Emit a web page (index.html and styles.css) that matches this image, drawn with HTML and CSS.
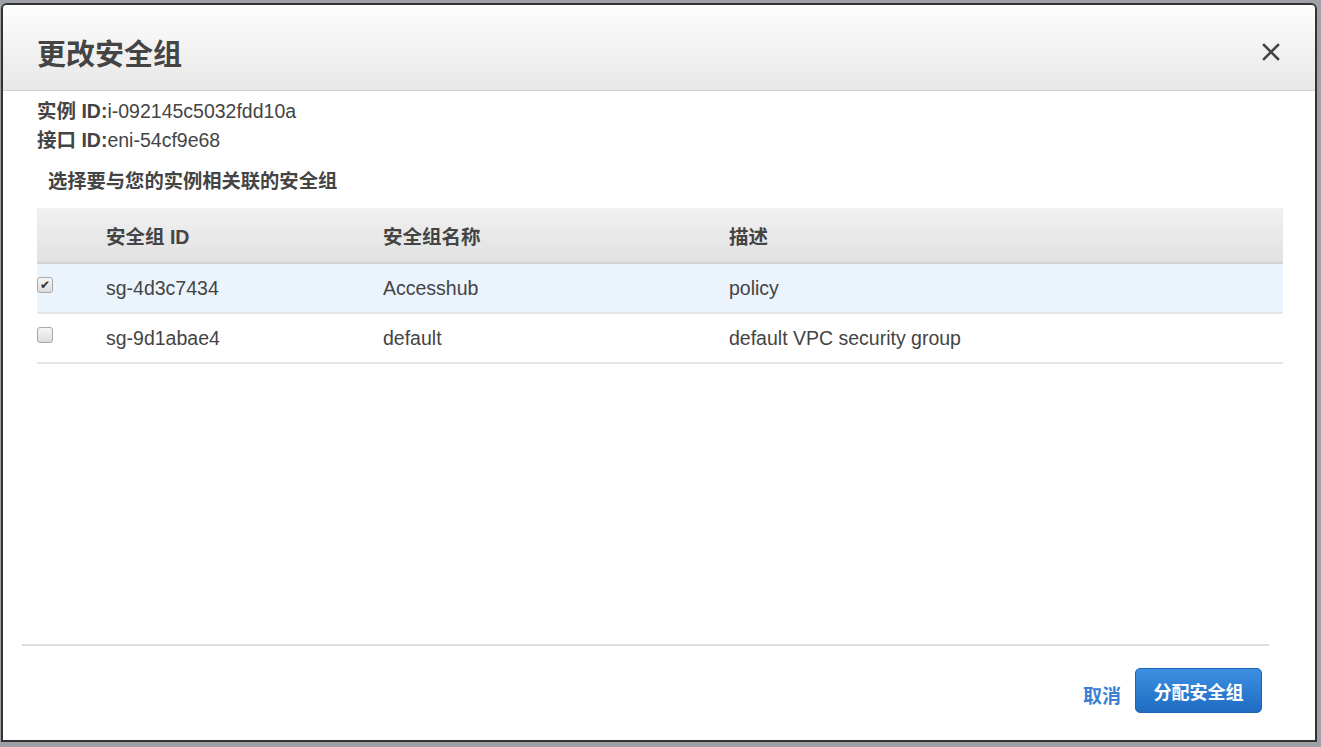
FILE: index.html
```html
<!DOCTYPE html>
<html lang="zh-CN">
<head>
<meta charset="UTF-8">
<title>更改安全组</title>
<link rel="stylesheet" href="styles.css">
</head>
<body>
	<div class="modal">
		<div class="modal-header">
			<h2>更改安全组</h2>
			<span class="close">
				<svg width="18" height="18" viewBox="0 0 18 18"><path d="M2 2L16 16M16 2L2 16" stroke="#444" stroke-width="2.6" stroke-linecap="square"/></svg>
			</span>
		</div>
		<div class="modal-body">
			<div class="info"><b>实例 ID:</b>i-092145c5032fdd10a</div>
			<div class="info"><b>接口 ID:</b>eni-54cf9e68</div>
			<div class="sub">选择要与您的实例相关联的安全组</div>
			<table class="grid">
				<col class="c0"><col class="c1"><col class="c2"><col>
				<tr>
					<th></th><th>安全组 ID</th><th>安全组名称</th><th>描述</th>
				</tr>
				<tr class="sel">
					<td><span class="chk on">&#10004;</span></td><td>sg-4d3c7434</td><td>Accesshub</td><td>policy</td>
				</tr>
				<tr>
					<td><span class="chk"></span></td><td>sg-9d1abae4</td><td>default</td><td>default VPC security group</td>
				</tr>
			</table>
		</div>
		<div class="modal-footer">
			<a class="cancel" href="#">取消</a>
			<button class="primary">分配安全组</button>
		</div>
	</div>
</body>
</html>
```

FILE: styles.css
```css
body {
	margin: 0;
	padding: 0;
	background: #9ea2a6;
	font-family: "Liberation Sans", "Noto Sans CJK SC", sans-serif;
	font-size: 19.5px;
	color: #444;
	height: 747px;
	overflow: hidden;
}
.modal {
	margin: 3px 0 0 1px;
	width: 1316px;
	height: 739px;
	box-sizing: border-box;
	border: 2px solid #333;
	border-radius: 6px 6px 0 0;
	background: #fff;
	display: flex;
	flex-direction: column;
	overflow: hidden;
}
.modal-header {
	height: 86px;
	box-sizing: border-box;
	display: flex;
	align-items: center;
	justify-content: space-between;
	padding: 9px 35px 0 34px;
	background: linear-gradient(#fdfdfd, #e8e8e8);
	border-bottom: 1px solid #cfcfcf;
}
.modal-header h2 {
	margin: 0;
	font-size: 29px;
	font-weight: bold;
	color: #444;
}
.close {
	display: flex;
}
.modal-body {
	flex: 1;
	padding: 6px 32px 0 34px;
}
.info {
	line-height: 29px;
}
.info b {
	font-weight: bold;
}
.sub {
	margin: 12px 0 0 11px;
	line-height: 29px;
	font-weight: bold;
	font-size: 19.3px;
}
.grid {
	margin-top: 12px;
	width: 100%;
	border-collapse: collapse;
}
.grid col.c0 {
	width: 69px;
}
.grid col.c1 {
	width: 277px;
}
.grid col.c2 {
	width: 346px;
}
.grid th {
	height: 54px;
	padding: 0;
	text-align: left;
	font-weight: bold;
	background: linear-gradient(#f1f1f1, #e1e1e1);
	border-bottom: 2px solid #d2d2d2;
}
.grid td {
	height: 48px;
	padding: 0;
	border-bottom: 2px solid #e6e6e6;
}
.grid tr.sel td {
	background: #ebf3fd;
}
.chk {
	display: inline-block;
	width: 14px;
	height: 14px;
	border: 1px solid #a9a9a9;
	border-radius: 3px;
	background: linear-gradient(#f6f6f6, #dcdcdc);
	vertical-align: middle;
	position: relative;
	top: -4px;
	font-size: 12px;
	line-height: 14px;
	text-align: center;
	color: #333;
}
.modal-footer {
	margin: 0 46px 0 19px;
	height: 96px;
	box-sizing: border-box;
	border-top: 2px solid #dcdcdc;
	display: flex;
	justify-content: flex-end;
	align-items: flex-start;
	padding: 22px 7px 0 0;
	gap: 14px;
}
.cancel {
	margin-top: 13px;
	color: #3b7fd4;
	font-weight: bold;
	text-decoration: none;
	font-size: 19px;
}
button.primary {
	width: 127px;
	height: 45px;
	border: 1px solid #1b63b4;
	border-radius: 5px;
	background: linear-gradient(#3d8fe1, #1f6cc2);
	color: #fff;
	font-family: "Liberation Sans", "Noto Sans CJK SC", sans-serif;
	font-size: 18px;
	font-weight: bold;
	padding: 0;
}
```
